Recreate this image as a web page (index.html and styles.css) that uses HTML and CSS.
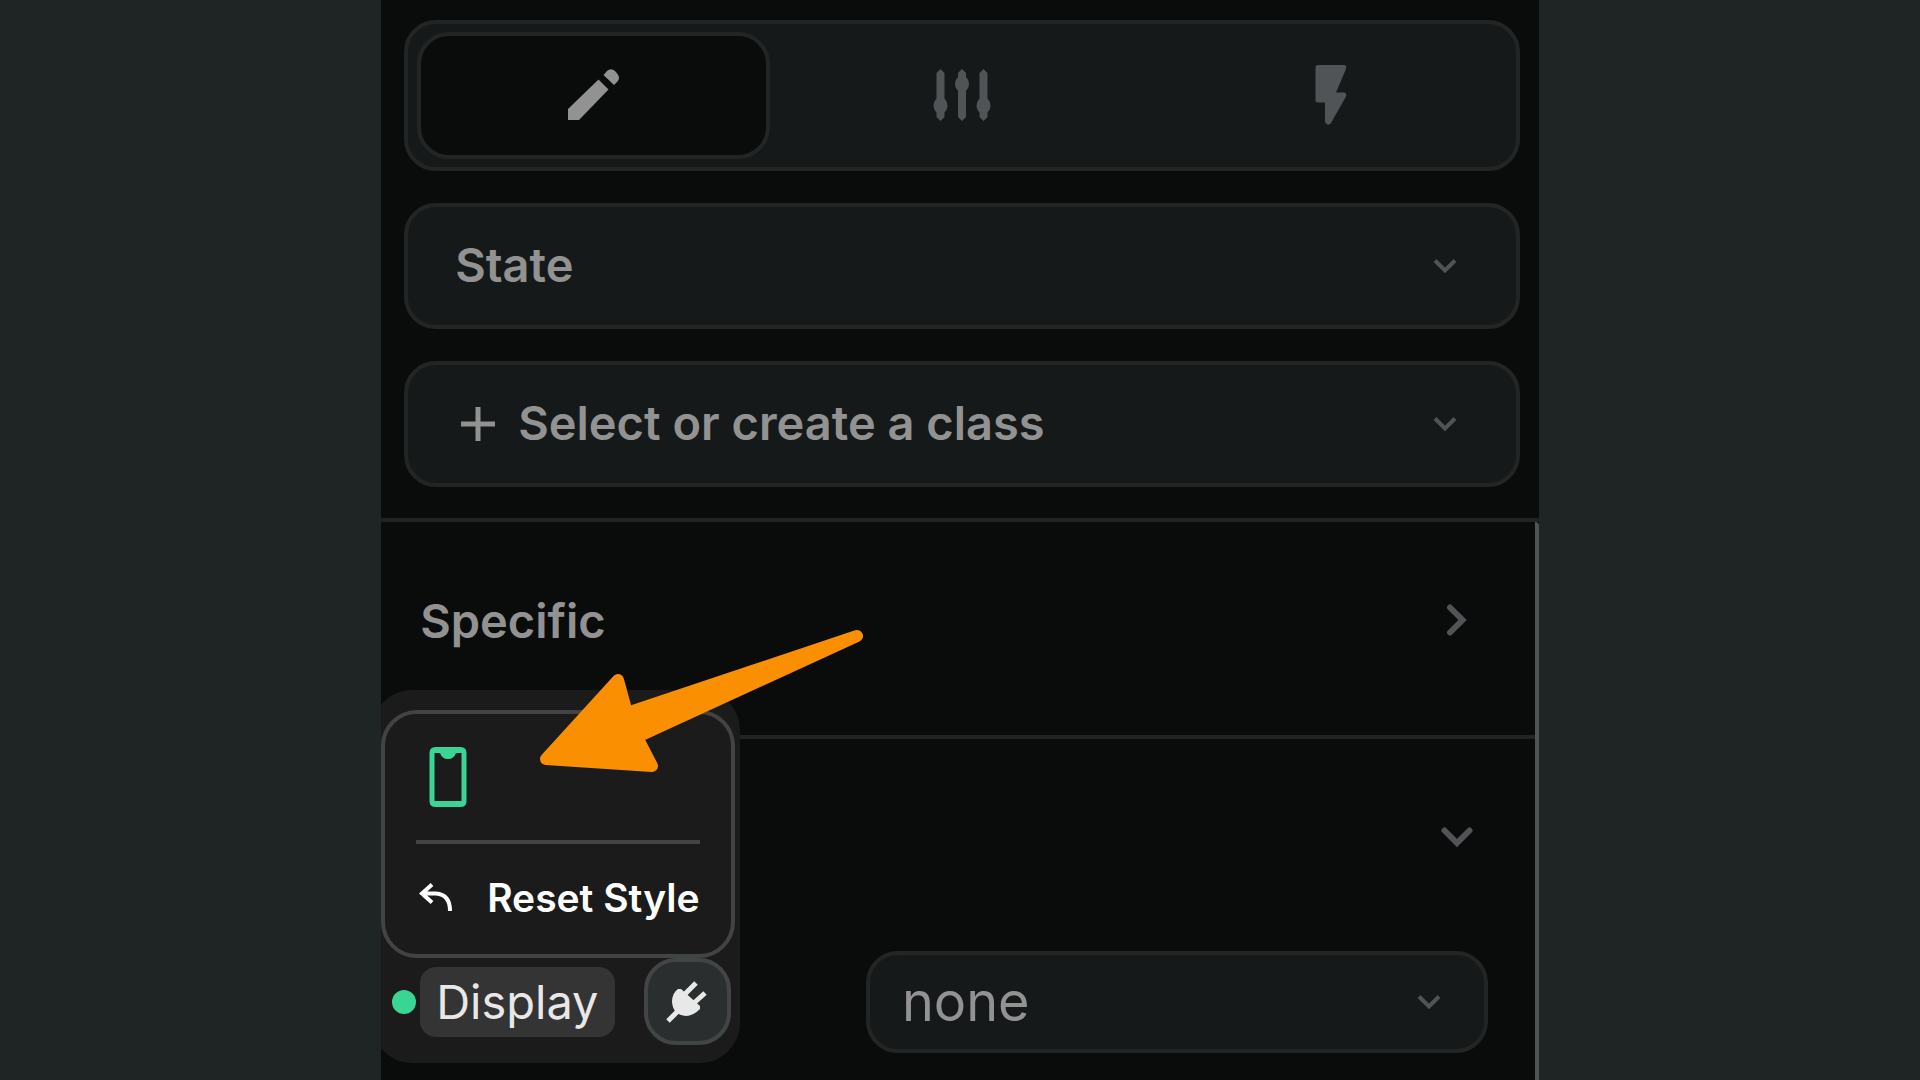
FILE: index.html
```
<!DOCTYPE html>
<html lang="en">
<head>
  <meta charset="UTF-8">
  <meta name="viewport" content="width=device-width, initial-scale=1.0">
  <title>Style Panel</title>
  <link rel="stylesheet" href="styles.css">
</head>
<body>
  <main class="panel">
    <div class="toolbar">
      <nav class="tabs">
        <button class="tab active" type="button" aria-label="Style">
          <svg width="51" height="51" viewBox="0 0 51 51" fill="currentColor">
            <path d="M0 40 30.500 10.500 40.500 20.500 11 51H0z"/>
            <path d="M35.500 6 39 2q4-3.500 8 0l2.500 3q3 4 0 7.500L46 16z"/>
          </svg>
        </button>
        <button class="tab" type="button" aria-label="Settings">
          <svg width="58" height="52" viewBox="0 0 58 52" fill="currentColor">
            <path d="M3.500 4 7.500 0l4 4v44l-4 4-4-4zM25 4l4-4 4 4v44l-4 4-4-4zM46.500 4l4-4 4 4v44l-4 4-4-4z"/>
            <ellipse cx="7.500" cy="36.500" rx="7" ry="8"/>
            <ellipse cx="29" cy="15" rx="7" ry="8"/>
            <ellipse cx="50.500" cy="36.500" rx="7" ry="8"/>
          </svg>
        </button>
        <button class="tab" type="button" aria-label="Interactions">
          <svg width="32" height="60" viewBox="0 0 32 60" fill="currentColor">
            <path d="M3 0h26q3 0 2 4L21 27.500h8q3 0 2 4L16 58q-3 4-6-1V37.500H3q-2.500 0-2.500-2.500V3Q.500 0 3 0z"/>
          </svg>
        </button>
      </nav>

      <div class="field">
        <select class="field-select" aria-label="State">
          <option>State</option>
        </select>
        <svg class="caret" viewBox="0 0 24 16"><path d="M2 2.500 12 12.500l10-10"/></svg>
      </div>

      <div class="field">
        <svg class="plus" viewBox="0 0 34 34"><path d="M17 0v34M0 17h34"/></svg>
        <select class="field-select" aria-label="Class">
          <option>Select or create a class</option>
        </select>
        <svg class="caret" viewBox="0 0 24 16"><path d="M2 2.500 12 12.500l10-10"/></svg>
      </div>
    </div>

    <div class="sections">
      <section class="section">
        <button class="section-head" type="button">
          <span>Specific</span>
          <svg class="chevron" viewBox="0 0 32 32"><path d="M9 3.500 21.500 16 9 28.500"/></svg>
        </button>
      </section>

      <section class="section">
        <button class="section-head" type="button" aria-label="Toggle section">
          <svg class="chevron" viewBox="0 0 32 32"><path d="M3.500 9.500 16 22 28.500 9.500"/></svg>
        </button>

        <div class="property">
          <div class="popover">
            <div class="card">
              <svg class="phone" width="38" height="60" viewBox="0 0 38 60" fill="currentColor" fill-rule="evenodd">
                <path d="M6.500 0h25q6 0 6 6v48q0 6-6 6h-25q-6 0-6-6V6q0-6 6-6zM5.500 6v48h27V6H27q-2 6-8 6t-8-6z"/>
              </svg>
              <hr class="rule">
              <button class="reset" type="button">
                <svg width="34" height="30" viewBox="0 0 34 30"><path d="M13 1.500 3 10.500l10 9M3 10.500h14q14 1 14 17.500"/></svg>
                <span>Reset Style</span>
              </button>
            </div>
            <div class="property-bar">
              <span class="dot"></span>
              <label class="property-name" for="display">Display</label>
              <button class="plug" type="button" aria-label="Connect data">
                <svg width="44" height="44" viewBox="0 0 44 44">
                  <path d="M13 9h3l19 17v3q-7 7-14 7Q8 35 7 22q0-9 6-13z" fill="currentColor"/>
                  <path d="M20 14 31 3M29 23 40 13M3 41 13 31" fill="none" stroke="currentColor" stroke-width="5"/>
                </svg>
              </button>
            </div>
          </div>

          <div class="field field-small">
            <select class="field-select" id="display">
              <option>none</option>
            </select>
            <svg class="caret" viewBox="0 0 24 16"><path d="M2 2.500 12 12.500l10-10"/></svg>
          </div>
        </div>
      </section>
    </div>

    <svg class="pointer" width="340" height="160" viewBox="530 620 340 160">
      <path d="M857 636 627 713 618 680 546 759 652 766 637 737z"/>
    </svg>
  </main>
</body>
</html>
```
FILE: styles.css
```
* {
  box-sizing: border-box;
}
body {
  margin: 0;
  background-color: #1f2424;
  font-family: Inter, sans-serif;
  font-size: 47px;
  color: #929292;
}
button, select {
  margin: 0;
  padding: 0;
  border: none;
  background: none;
  font: inherit;
  color: inherit;
  cursor: pointer;
}
svg {
  display: block;
  flex-shrink: 0;
}

/* Panel */
.panel {
  position: relative;
  display: flex;
  flex-direction: column;
  width: 60.3%;
  height: 100vh;
  margin: 0 auto;
  background-color: #0a0c0b;
  overflow: hidden;
}
.toolbar {
  display: flex;
  flex-direction: column;
  gap: 32px;
  padding: 20px 19px 31px 23px;
  border-bottom: 4px solid #222424;
}

/* Tabs */
.tabs {
  display: grid;
  grid-template-columns: repeat(3, 1fr);
  gap: 16px;
  padding: 8px 9px;
  border: 4px solid #232525;
  border-radius: 32px;
  background-color: #151919;
}
.tab {
  display: flex;
  align-items: center;
  justify-content: center;
  height: 127px;
  padding-bottom: 2px;
  border: 4px solid transparent;
  border-radius: 32px;
  color: #505456;
}
.tab.active {
  border-color: #232525;
  background-color: #0a0c0b;
  color: #929292;
}

/* Dropdown fields */
.field {
  display: flex;
  align-items: center;
  gap: 23px;
  height: 126px;
  padding: 0 59px 0 47px;
  border: 4px solid #232525;
  border-radius: 32px;
  background-color: #151919;
}
.field-select {
  flex: 1;
  min-width: 0;
  padding-bottom: 4px;
  appearance: none;
  outline: none;
  font-weight: 600;
}
.caret {
  width: 24px;
  height: 16px;
  fill: none;
  stroke: #505456;
  stroke-width: 4;
}
.plus {
  width: 34px;
  height: 34px;
  margin-left: 6px;
  fill: none;
  stroke: #929292;
  stroke-width: 5;
}

/* Sections */
.sections {
  flex: 1;
  border-right: 4px solid #505254;
  border-top-right-radius: 4px;
}
.section:first-child {
  padding-bottom: 17px;
  border-bottom: 4px solid #222424;
}
.section-head {
  display: flex;
  align-items: center;
  width: 100%;
  height: 196px;
  padding: 0 62px 0 39px;
  font-weight: 600;
}
.chevron {
  width: 32px;
  height: 32px;
  margin-left: auto;
  fill: none;
  stroke: #505456;
  stroke-width: 6;
  stroke-linecap: round;
}
.property {
  position: relative;
  display: flex;
  justify-content: flex-end;
  padding: 16px 47px 0 0;
}
.field-small {
  width: 56.2%;
  height: 102px;
  padding: 0 43px 0 32px;
}
.field-small .field-select {
  padding-bottom: 2px;
  font-size: 54px;
  font-weight: 400;
}

/* Popover over the property label */
.popover {
  position: absolute;
  left: -9px;
  bottom: -10px;
  padding: 20px 5px 18px 9px;
  border-radius: 40px;
  background-color: #1a1b1a;
}
.card {
  padding: 33px 31px 32px;
  border: 4px solid #424444;
  border-radius: 36px;
}
.phone {
  margin-left: 13px;
  color: #3ad594;
}
.rule {
  height: 4px;
  margin: 33px 0 30px;
  border: none;
  background-color: #434444;
}
.reset {
  display: flex;
  align-items: center;
  gap: 34px;
  padding-left: 3px;
  font-size: 39px;
  line-height: 48px;
  font-weight: 600;
  color: #fff;
  white-space: nowrap;
}
.reset svg {
  fill: none;
  stroke: currentColor;
  stroke-width: 4;
}
.property-bar {
  display: flex;
  align-items: center;
  padding: 0 4px 0 11px;
}
.dot {
  width: 24px;
  height: 24px;
  margin-right: 4px;
  border-radius: 50%;
  background-color: #3ad594;
}
.property-name {
  padding: 0 16px;
  border-radius: 16px;
  background-color: #333433;
  line-height: 70px;
  color: #e8e8e8;
}
.plug {
  display: flex;
  align-items: center;
  justify-content: center;
  width: 87px;
  height: 87px;
  margin-left: auto;
  border: 4px solid #424546;
  border-radius: 32px;
  background-color: #2b2e2f;
  color: #e8e8e8;
}

/* Orange arrow */
.pointer {
  position: absolute;
  top: 620px;
  left: 149px;
  fill: #fb8f02;
  stroke: #fb8f02;
  stroke-width: 12;
  stroke-linejoin: round;
  pointer-events: none;
}
```
